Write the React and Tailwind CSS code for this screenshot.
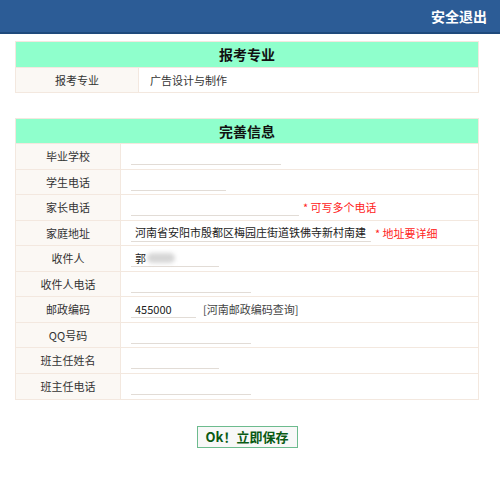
import React from 'react'

const font = { fontFamily: '"Noto Sans CJK SC", "Noto Sans", sans-serif' }

function Field({ w, value }) {
  return (
    <input
      readOnly
      value={value || ''}
      className={`h-[18px] border-0 border-b border-[#e2dcd6] bg-white px-[4px] text-[11px] text-[#222] outline-none ${w}`}
    />
  )
}

function Row({ label, children, last }) {
  return (
    <div className={`flex h-[25.5px] ${last ? '' : 'border-b border-[#f3e8df]'}`}>
      <div className="flex w-[105px] shrink-0 items-center justify-center border-r border-[#f3e8df] bg-[#fbf8f4] text-[11px] text-[#333]">
        {label}
      </div>
      <div className="flex flex-1 items-center gap-[4px] pl-[10px] text-[11px] text-[#333]">{children}</div>
    </div>
  )
}

export default function App() {
  return (
    <div className="min-h-[486px] w-[500px] bg-white" style={font}>
      {/* top bar */}
      <div className="flex h-[34px] items-center justify-end border-b-2 border-[#1f4a7c] bg-[#2c5c96] pr-[13px]">
        <span className="text-[14px] font-bold text-white">安全退出</span>
      </div>

      <div className="ml-[15px] mt-[7px] w-[464px]">
        {/* 报考专业 */}
        <div className="border border-[#f3e8df]">
          <div className="flex h-[25px] items-center justify-center bg-[#8fffcc] text-[14px] font-bold text-[#111]">
            报考专业
          </div>
          <div className="flex h-[25px] border-t border-[#f3e8df]">
            <div className="flex w-[123px] items-center justify-center border-r border-[#f3e8df] bg-[#fbf8f4] text-[11px] text-[#333]">
              报考专业
            </div>
            <div className="flex items-center pl-[11px] text-[11px] text-[#333]">广告设计与制作</div>
          </div>
        </div>

        {/* 完善信息 */}
        <div className="mt-[25px] border border-[#f3e8df]">
          <div className="flex h-[25px] items-center justify-center border-b border-[#f3e8df] bg-[#8fffcc] text-[14px] font-bold text-[#111]">
            完善信息
          </div>
          <Row label="毕业学校"><Field w="w-[150px]" /></Row>
          <Row label="学生电话"><Field w="w-[95px]" /></Row>
          <Row label="家长电话">
            <Field w="w-[168px]" />
            <span className="text-[#ff2222]">* 可写多个电话</span>
          </Row>
          <Row label="家庭地址">
            <Field w="w-[240px]" value="河南省安阳市殷都区梅园庄街道铁佛寺新村南建" />
            <span className="text-[#ff2222]">* 地址要详细</span>
          </Row>
          <Row label="收件人">
            <div className="flex h-[18px] w-[88px] items-center border-b border-[#e2dcd6] px-[4px]">
              <span className="text-[#222]">郭</span>
              <span className="ml-[1px] h-[10px] w-[28px] rounded-full bg-[#d6d6d6] blur-[2px]"></span>
            </div>
          </Row>
          <Row label="收件人电话"><Field w="w-[120px]" /></Row>
          <Row label="邮政编码">
            <Field w="w-[65px]" value="455000" />
            <span className="ml-[3px] text-[11px] text-[#444]">[河南邮政编码查询]</span>
          </Row>
          <Row label="QQ号码"><Field w="w-[120px]" /></Row>
          <Row label="班主任姓名"><Field w="w-[88px]" /></Row>
          <Row label="班主任电话" last><Field w="w-[120px]" /></Row>
        </div>

        <div className="mt-[26px] flex justify-center">
          <button className="h-[22px] w-[101px] border border-[#6dbb8e] bg-[#f8f8f8] text-[13px] font-bold text-[#0a5a14]">
            Ok！立即保存
          </button>
        </div>
      </div>
    </div>
  )
}
